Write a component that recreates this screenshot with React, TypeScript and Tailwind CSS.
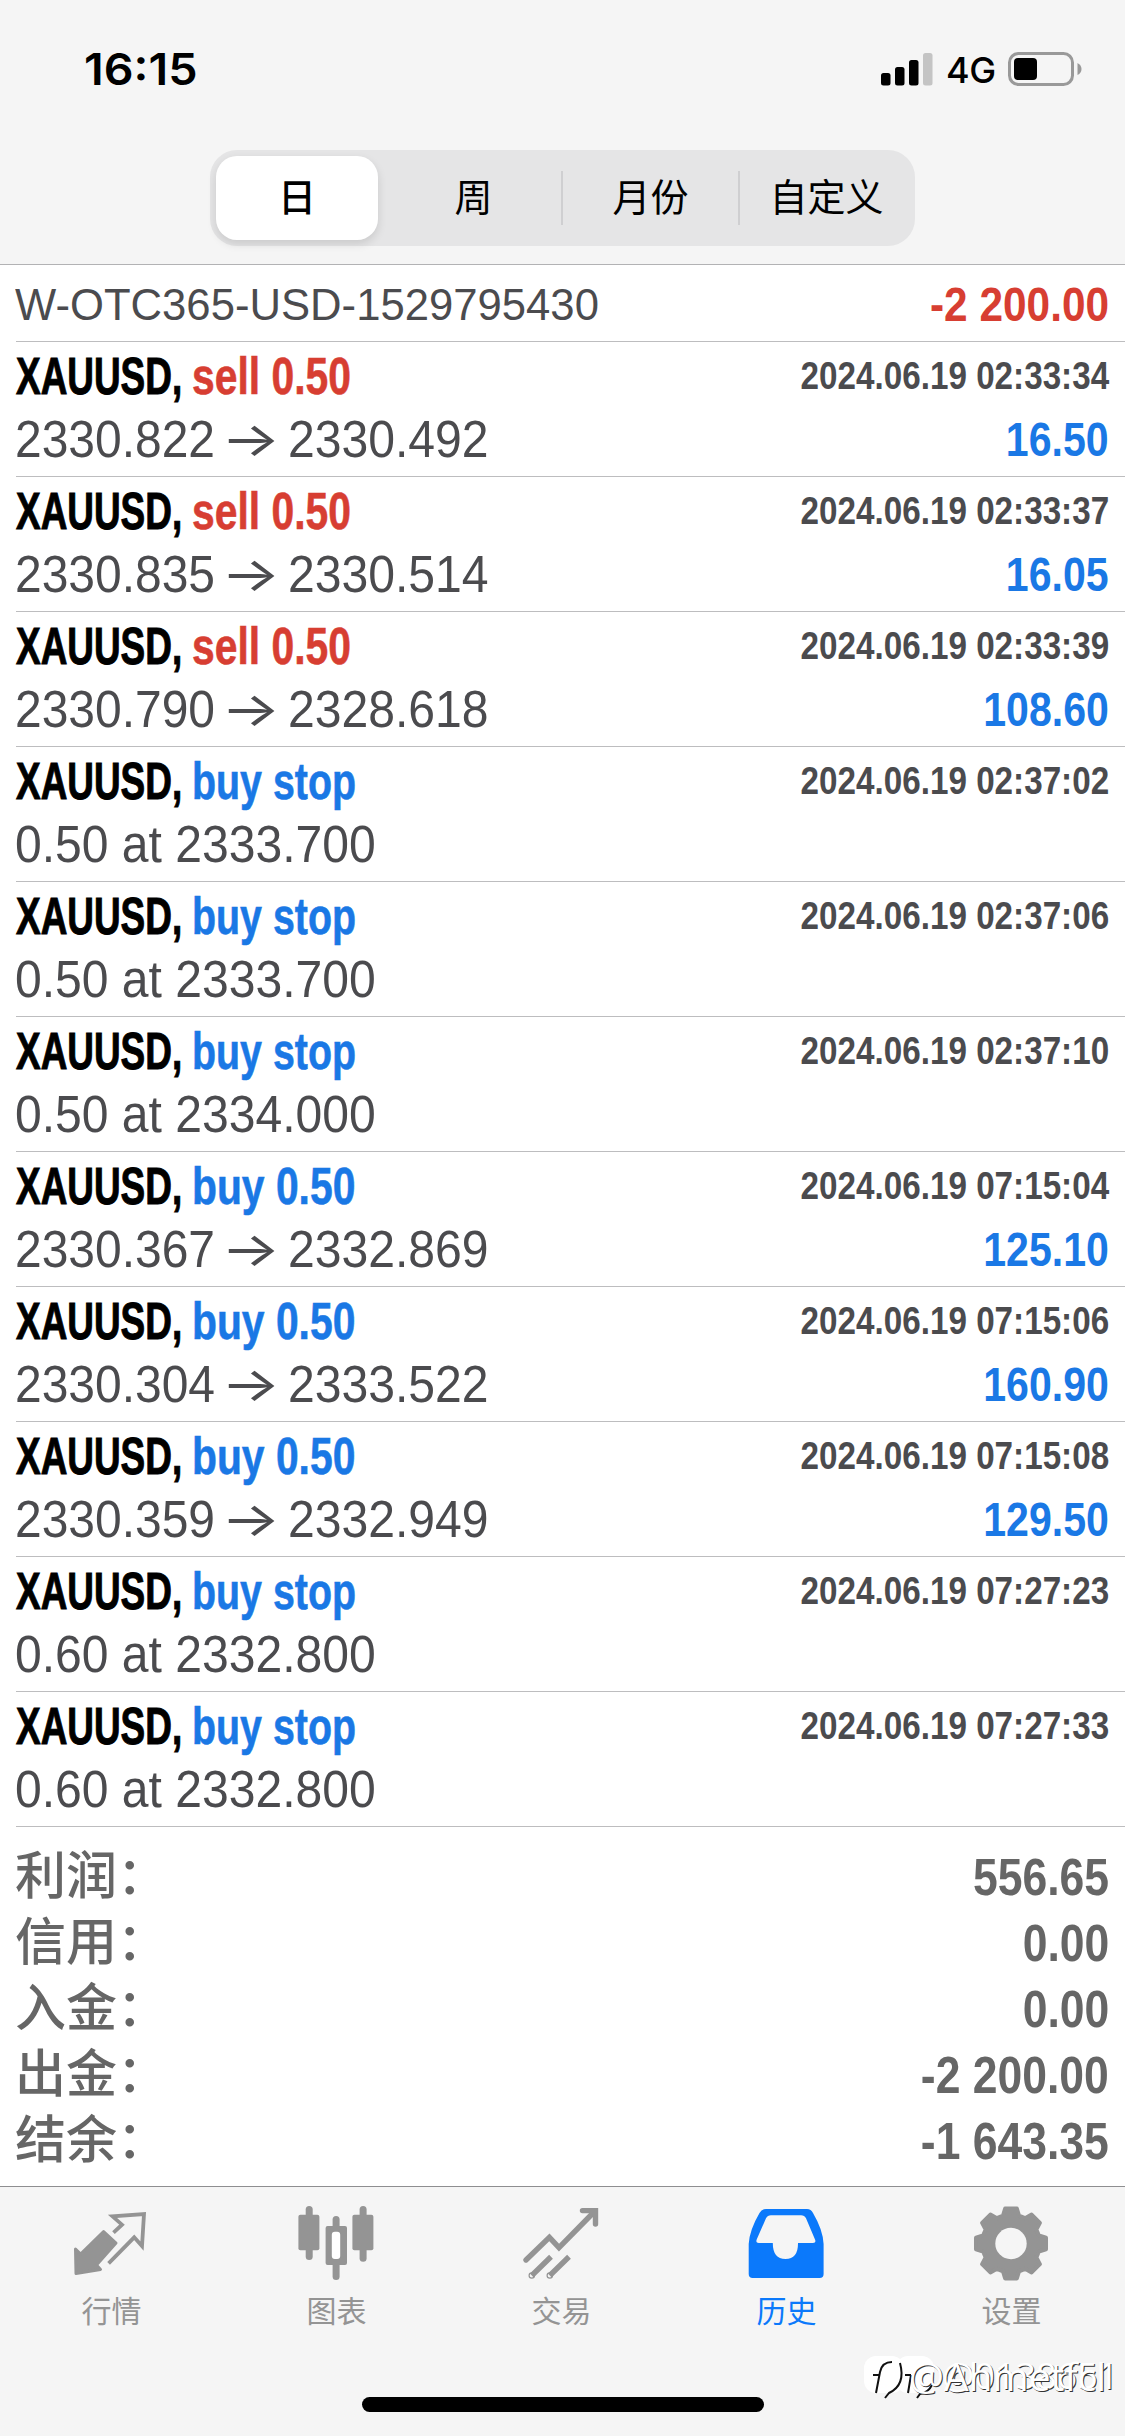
import type { ReactNode } from 'react';
import clsx from 'clsx';

interface Deal {
  side: string;
  kind: 'sell' | 'buy' | 'stop';
  time: string;
  open?: string;
  close?: string;
  order?: string;
  profit?: string;
}

const deals: Deal[] = [
  { side: 'sell 0.50', kind: 'sell', time: '2024.06.19 02:33:34', open: '2330.822', close: '2330.492', profit: '16.50' },
  { side: 'sell 0.50', kind: 'sell', time: '2024.06.19 02:33:37', open: '2330.835', close: '2330.514', profit: '16.05' },
  { side: 'sell 0.50', kind: 'sell', time: '2024.06.19 02:33:39', open: '2330.790', close: '2328.618', profit: '108.60' },
  { side: 'buy stop', kind: 'stop', time: '2024.06.19 02:37:02', order: '0.50 at 2333.700' },
  { side: 'buy stop', kind: 'stop', time: '2024.06.19 02:37:06', order: '0.50 at 2333.700' },
  { side: 'buy stop', kind: 'stop', time: '2024.06.19 02:37:10', order: '0.50 at 2334.000' },
  { side: 'buy 0.50', kind: 'buy', time: '2024.06.19 07:15:04', open: '2330.367', close: '2332.869', profit: '125.10' },
  { side: 'buy 0.50', kind: 'buy', time: '2024.06.19 07:15:06', open: '2330.304', close: '2333.522', profit: '160.90' },
  { side: 'buy 0.50', kind: 'buy', time: '2024.06.19 07:15:08', open: '2330.359', close: '2332.949', profit: '129.50' },
  { side: 'buy stop', kind: 'stop', time: '2024.06.19 07:27:23', order: '0.60 at 2332.800' },
  { side: 'buy stop', kind: 'stop', time: '2024.06.19 07:27:33', order: '0.60 at 2332.800' }
];

const totals = [
  { label: '利润', value: '556.65' },
  { label: '信用', value: '0.00' },
  { label: '入金', value: '0.00' },
  { label: '出金', value: '-2 200.00' },
  { label: '结余', value: '-1 643.35' }
];

const periods = ['日', '周', '月份', '自定义'];

// Gear outline: 8 teeth around (39, 37.5)
const gearPoints = Array.from({ length: 8 }, (_, i) => {
  const base = i * 45 - 90;
  return [[-16, 29], [-9.5, 35.5], [9.5, 35.5], [16, 29]]
    .map(([deg, r]) => {
      const a = ((base + deg) * Math.PI) / 180;
      return `${(39 + r * Math.cos(a)).toFixed(2)},${(37.5 + r * Math.sin(a)).toFixed(2)}`;
    })
    .join(' ');
}).join(' ');

const tabs: { label: string; active?: boolean; icon: ReactNode }[] = [
  {
    label: '行情',
    icon: (
      <>
        <path
          d="M3.5 43 8.6 48 31.6 25.5 44 37 24.5 59 28.5 63.5 4 67.5Z"
          fill="currentColor"
          stroke="currentColor"
          strokeWidth="3"
          strokeLinejoin="round"
        />
        <path
          d="M41.5 26.7 50 18.7 40.5 10.3 72 8 70 40 62.2 31.3 36.6 57.3"
          fill="none"
          stroke="currentColor"
          strokeWidth="3.8"
        />
      </>
    )
  },
  {
    label: '图表',
    icon: (
      <g fill="currentColor">
        <rect x="8.7" y="0" width="7" height="54" rx="3.5" />
        <rect x="1.4" y="8.7" width="21" height="35.5" rx="2" />
        <rect x="35.6" y="10" width="7" height="64" rx="3.5" />
        <rect x="28.6" y="20" width="21.4" height="39" rx="2" />
        <rect x="34.8" y="25.7" width="8.4" height="27.3" rx="3" fill="#fff" />
        <rect x="62.6" y="0" width="7" height="55.7" rx="3.5" />
        <rect x="55.4" y="8.7" width="21" height="35.5" rx="2" />
      </g>
    )
  },
  {
    label: '交易',
    icon: (
      <g fill="none" stroke="currentColor" strokeWidth="5.4">
        <path d="M4 54 27.4 31.3 37 41.7 73 5" strokeLinecap="round" />
        <path d="M60.5 4.6H73.5V18" strokeLinecap="round" />
        <path d="M9.8 69.5 29 50.7M27.8 69.5 47 50.7" />
        <circle cx="9.8" cy="69.5" r=".6" />
        <circle cx="27.8" cy="69.5" r=".6" />
      </g>
    )
  },
  {
    label: '历史',
    active: true,
    icon: (
      <path
        fill="currentColor"
        fillRule="evenodd"
        d="M19 3H60q4 0 6 4 10 17 10.600 31V68q0 4-4 4H5.700q-4 0-4-4V38Q2.500 24 12.500 7 15 3 19 3ZM24 9.300q-3.500 0-5 3L9.700 33.500q-1.300 3.500 2 3.500H25.800q0 16 12.700 16T51 37H66q3.500 0 2-3.500L59 12.300q-1.500-3-5-3Z"
      />
    )
  },
  {
    label: '设置',
    icon: (
      <>
        <polygon points={gearPoints} fill="currentColor" stroke="currentColor" strokeWidth="4" strokeLinejoin="round" />
        <circle cx="39" cy="37.5" r="15.7" fill="#f5f5f5" />
      </>
    )
  }
];

function StatusBar() {
  return (
    <div className="flex h-[150px] justify-between pl-[84px] pr-[42px] font-['Inter',sans-serif] text-black">
      <span className="origin-left scale-x-[1.060] pt-[42px] text-[44px] font-semibold leading-[54px]">16:15</span>
      <div className="flex pt-[50px]">
        <svg width="52" height="40" viewBox="0 0 52 40">
          <rect x="0" y="23" width="9.500" height="12.500" rx="2.500" />
          <rect x="14" y="17" width="9.500" height="18.500" rx="2.500" />
          <rect x="28" y="10" width="9.500" height="25.500" rx="2.500" />
          <rect x="42" y="3" width="9.500" height="32.500" rx="2.500" fill="#c4c4c4" />
        </svg>
        <span className="ml-[13px] w-[48px] text-[36px] font-medium leading-[40px] tracking-[-0.500px]">4G</span>
        <svg className="ml-[13px]" width="76" height="40" viewBox="0 0 76 40">
          <rect x="2.500" y="3.500" width="63" height="31" rx="9" fill="none" stroke="#999" strokeWidth="3" />
          <rect x="7" y="8" width="23" height="22" rx="4" />
          <path d="M70.500 13q4 2 4 6t-4 6Z" fill="#999" />
        </svg>
      </div>
    </div>
  );
}

function PeriodSwitch() {
  return (
    <div className="mx-auto flex h-[96px] w-[705px] rounded-[27px] bg-[#e5e5e6] p-[6px] text-[38px] leading-[84px] text-black">
      {periods.map((p, i) => (
        <div
          key={p}
          className={clsx(
            'flex shrink-0 items-center text-center',
            i === 0 && 'w-[162px] rounded-[21px] bg-white font-medium shadow-[0_4px_10px_rgba(0,0,0,0.12)]',
            i === 1 && 'ml-[8px] w-[177px]',
            i === 2 && 'w-[177px]',
            i === 3 && 'w-[173px]'
          )}
        >
          <span className="flex-1">{p}</span>
          {(i === 1 || i === 2) && <span className="h-[54px] w-[2px] bg-[#cfcfd1]" />}
        </div>
      ))}
    </div>
  );
}

function DealRow({ deal }: { deal: Deal }) {
  return (
    <div className="ml-4 h-[135px] whitespace-nowrap border-b border-[#bdbdbf] pr-4">
      <div className="flex h-[74px] justify-between">
        <div className="flex text-[52px] font-bold leading-[69px]">
          <span className="w-[176px] origin-left scale-x-[0.710] text-black [-webkit-text-stroke:1px_currentColor]">XAUUSD,</span>
          <span
            className={clsx(
              'origin-left [-webkit-text-stroke:0.600px_currentColor]',
              deal.kind === 'sell' ? 'text-[#d73e32]' : 'text-[#1a78e5]',
              deal.kind === 'stop' ? 'scale-x-[0.757]' : 'scale-x-[0.785]'
            )}
          >
            {deal.side}
          </span>
        </div>
        <span className="origin-right scale-x-[0.852] text-[39px] font-bold leading-[67px] text-[#4b4b4e]">{deal.time}</span>
      </div>
      <div className="flex justify-between">
        {deal.order ? (
          <span className="-ml-px origin-left scale-x-[0.942] text-[51px] leading-[48px] text-[#4b4b4e]">{deal.order}</span>
        ) : (
          <div className="-ml-px flex text-[51px] leading-[48px] text-[#4b4b4e]">
            <span className="w-[206px] origin-left scale-x-[0.940]">{deal.open}</span>
            <span className="w-[67px] origin-left scale-x-[1.300] font-['Inter',sans-serif] text-[48px] font-normal leading-[45px]">→</span>
            <span className="origin-left scale-x-[0.943]">{deal.close}</span>
          </div>
        )}
        {deal.profit && (
          <span className="origin-right scale-x-[0.838] text-[49px] font-bold leading-[46px] text-[#1a78e5]">{deal.profit}</span>
        )}
      </div>
    </div>
  );
}

function TabBar() {
  return (
    <nav className="relative h-[250px] border-t border-[#8e8e90] bg-[#f5f5f5]">
      <div className="flex pt-[19px]">
        {tabs.map((tab) => (
          <div
            key={tab.label}
            className={clsx('flex w-[225px] flex-col items-center', tab.active ? 'text-[#0b79fb]' : 'text-[#949494]')}
          >
            <svg className="-ml-[2px]" width="80" height="80" viewBox="0 0 80 80">
              {tab.icon}
            </svg>
            <span className="mr-[2px] mt-[4px] text-[30px] leading-[44px]">{tab.label}</span>
          </div>
        ))}
      </div>
      <div className="absolute left-[362px] top-[210px] h-[15px] w-[402px] rounded-full bg-black" />
      <Watermark />
    </nav>
  );
}

function Watermark() {
  return (
    <div className="absolute left-[864px] top-[161px] h-[56px] w-[261px] whitespace-nowrap font-['Open_Sans',sans-serif] leading-[56px] text-white [text-shadow:1px_1px_0_#333]">
      <svg className="absolute left-0 top-[4px]" width="80" height="50" viewBox="0 0 80 50">
        <rect x="32" y="4" width="38" height="37" rx="12" fill="#fff" />
        <rect x="0" y="4" width="40" height="37" rx="12" fill="#fff" />
        <g fill="none" stroke="#111" strokeWidth="2">
          <path d="M12 41 16 20q2-10 12-10M9 23h6M36 11q6 22-11 30l-4 5" />
          <path d="M44 41 47 23M41 23h6M68 33q-4 8-12 9l-3 4" />
        </g>
      </svg>
      <span className="absolute left-[78px] top-0 text-[36px]">@0138651</span>
      <span className="absolute left-[45px] top-0 text-[39px]">@Ahmetfcl</span>
    </div>
  );
}

export default function App() {
  return (
    <div className="flex h-[2436px] w-[1125px] flex-col overflow-hidden bg-white font-['Liberation_Sans','Noto_Sans_CJK_SC',sans-serif]">
      <header className="h-[265px] border-b border-[#b2b2b4] bg-[#f5f5f5]">
        <StatusBar />
        <PeriodSwitch />
      </header>

      <main className="flex-1">
        {/* Account line */}
        <div className="ml-4 flex h-[77px] justify-between whitespace-nowrap border-b border-[#bdbdbf] pr-4">
          <span className="-ml-px origin-left scale-x-[0.970] text-[45px] leading-[79px] text-[#4b4b4e]">W-OTC365-USD-1529795430</span>
          <span className="origin-right scale-x-[0.865] text-[49px] font-bold leading-[79px] text-[#d73e32]">-2 200.00</span>
        </div>

        {deals.map((deal) => (
          <DealRow key={deal.time} deal={deal} />
        ))}

        {/* Totals */}
        <div className="pl-[15px] pr-4 pt-[17px] text-[#666]">
          {totals.map((t) => (
            <div key={t.label} className="flex h-[66px] justify-between whitespace-nowrap leading-[66px]">
              <span className="text-[51px] font-medium">{`${t.label}：`}</span>
              <span className="origin-right scale-x-[0.855] text-[52px] font-bold">{t.value}</span>
            </div>
          ))}
        </div>
      </main>

      <TabBar />
    </div>
  );
}
